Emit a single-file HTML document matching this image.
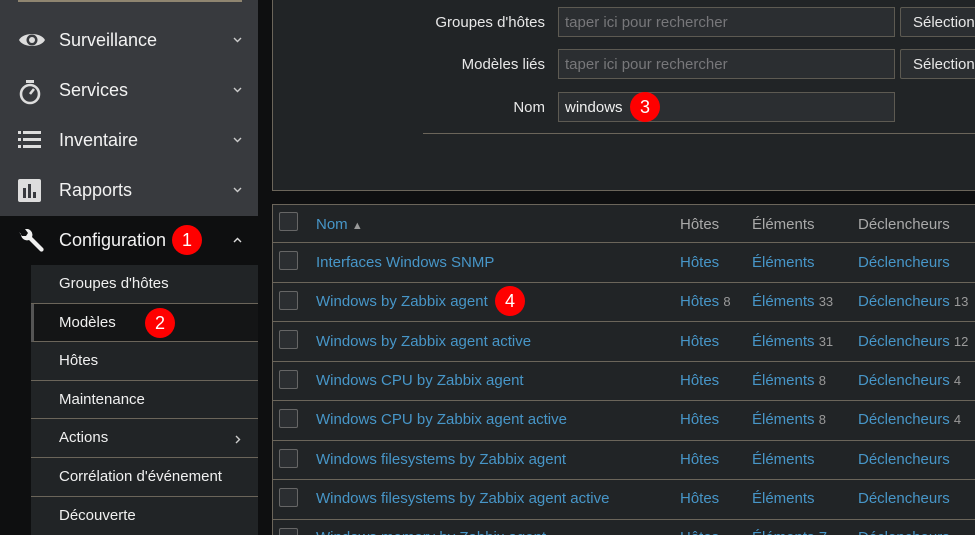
<!DOCTYPE html>
<html><head><meta charset="utf-8"><style>
*{box-sizing:border-box;margin:0;padding:0}
html,body{width:975px;height:535px;overflow:hidden}
body{background:#0e0f10;font-family:"Liberation Sans",Arial,sans-serif;position:relative}
.sb{position:absolute;left:0;top:0;width:258px;height:216px;background:#383a3e}
.topbar{position:absolute;left:18px;top:0;width:224px;height:2px;background:#8f8570}
.mi{position:absolute;left:0;width:258px;height:50px;color:#f2f2f2;font-size:18px}
.mi .t{position:absolute;left:59px;top:14px}
.mi .c{position:absolute;left:233px;top:21px}
.ic{position:absolute;left:18px;top:13px}
.conf{background:#0e0f10;top:216px}
.sub{position:absolute;left:31px;top:265px;width:227px;height:270px;background:#212426}
.si{position:absolute;left:0;width:227px;height:38.6px;border-bottom:1px solid #6b655a;color:#f0f0f0;font-size:15px}
.si span{position:absolute;left:28px;top:10px}
.badge{position:absolute;width:30px;height:30px;border-radius:50%;background:#f00;color:#fff;font-size:18px;text-align:center;line-height:30px}
.fp{position:absolute;left:272px;top:-2px;width:710px;height:193px;background:#212426;border:1px solid #6b655a}
.lbl{position:absolute;color:#e8e8e8;font-size:15px;text-align:right;width:200px;left:345px}
.inp{position:absolute;left:558px;width:337px;height:30px;background:#2b2e31;border:1px solid #5d5a52;color:#77777a;font-size:15px;padding:6px 6px}
.btn{position:absolute;left:900px;width:90px;height:30px;border:1px solid #5d5a52;border-radius:2px;background:#2b2e31;color:#e8e8e8;font-size:15px;padding:6px 12px}
.tb{position:absolute;left:272px;top:204px;width:710px;height:340px;background:#212426;border:1px solid #6b655a}
.row{position:absolute;left:272px;width:703px;border-bottom:1px solid #6b655a;font-size:15px}
.cb{position:absolute;left:7px;width:19px;height:19px;border:1px solid #666;border-radius:2px;background:#2b2e31}
.row span{position:absolute}
.lk{color:#4796c8}.g{color:#9a9a9a}.h{color:#a9a9a9}
</style></head><body>
<div class="sb"></div>
<div class="topbar"></div>
<div class="mi" style="top:16px"><svg class="ic" width="28" height="22" viewBox="0 0 28 22"><path d="M1 11C5 3 23 3 27 11C23 19 5 19 1 11Z" fill="#ddd"/><circle cx="14" cy="11" r="5.5" fill="#383a3e"/><circle cx="14" cy="11" r="3" fill="#ddd"/></svg><span class="t">Surveillance</span><svg class="c" width="9" height="6"><path d="M1 1L4.5 4.5L8 1" stroke="#ccc" stroke-width="1.4" fill="none"/></svg></div>
<div class="mi" style="top:66px"><svg class="ic" width="24" height="26" viewBox="0 0 24 26"><rect x="8" y="1" width="8" height="3" fill="#ddd"/><circle cx="12" cy="15" r="9" fill="none" stroke="#ddd" stroke-width="2.6"/><path d="M12 15L16 10" stroke="#ddd" stroke-width="2.6"/></svg><span class="t">Services</span><svg class="c" width="9" height="6"><path d="M1 1L4.5 4.5L8 1" stroke="#ccc" stroke-width="1.4" fill="none"/></svg></div>
<div class="mi" style="top:116px"><svg class="ic" width="24" height="22" viewBox="0 0 24 22"><g fill="#ddd"><rect x="0" y="2" width="3" height="3"/><rect x="5" y="2" width="18" height="3"/><rect x="0" y="9" width="3" height="3"/><rect x="5" y="9" width="18" height="3"/><rect x="0" y="16" width="3" height="3"/><rect x="5" y="16" width="18" height="3"/></g></svg><span class="t">Inventaire</span><svg class="c" width="9" height="6"><path d="M1 1L4.5 4.5L8 1" stroke="#ccc" stroke-width="1.4" fill="none"/></svg></div>
<div class="mi" style="top:166px"><svg class="ic" width="24" height="24" viewBox="0 0 24 24"><rect x="0" y="0" width="23" height="23" rx="2" fill="#ddd"/><g fill="#383a3e"><rect x="5" y="9" width="3" height="10"/><rect x="10" y="5" width="3" height="14"/><rect x="15" y="13" width="3" height="6"/></g></svg><span class="t">Rapports</span><svg class="c" width="9" height="6"><path d="M1 1L4.5 4.5L8 1" stroke="#ccc" stroke-width="1.4" fill="none"/></svg></div>
<div class="mi conf"><svg class="ic" width="26" height="26" viewBox="0 0 26 26"><path d="M3 5A6 6 0 0 0 11 11L22 22A2 2 0 0 0 25 19L14 8A6 6 0 0 0 7 0L10 4L8 7L4 7L1 3Z" fill="#f0f0f0"/></svg><span class="t">Configuration</span><svg class="c" width="9" height="6"><path d="M1 5L4.5 1.5L8 5" stroke="#ddd" stroke-width="1.4" fill="none"/></svg></div>
<div class="badge" style="left:172px;top:225px">1</div>
<div class="sub">
<div class="si" style="top:0"><span>Groupes d'hôtes</span></div>
<div class="si" style="top:38.6px;background:#141516;border-left:3px solid #555"><span style="left:25px">Modèles</span></div>
<div class="si" style="top:77.2px"><span>Hôtes</span></div>
<div class="si" style="top:115.8px"><span>Maintenance</span></div>
<div class="si" style="top:154.4px"><span>Actions</span><svg style="position:absolute;left:204px;top:16px" width="6" height="9"><path d="M1 1L4.5 4.5L1 8" stroke="#ccc" stroke-width="1.4" fill="none"/></svg></div>
<div class="si" style="top:193px"><span>Corrélation d'événement</span></div>
<div class="si" style="top:231.6px;border:none"><span>Découverte</span></div>
</div>
<div class="badge" style="left:145px;top:308px">2</div>
<div class="fp"></div>
<div class="lbl" style="top:14px">Groupes d'hôtes</div>
<div class="inp" style="top:7px">taper ici pour rechercher</div>
<div class="btn" style="top:7px">Sélection</div>
<div class="lbl" style="top:56px">Modèles liés</div>
<div class="inp" style="top:49px">taper ici pour rechercher</div>
<div class="btn" style="top:49px">Sélection</div>
<div class="lbl" style="top:99px">Nom</div>
<div class="inp" style="top:92px;color:#f0f0f0">windows</div>
<div class="badge" style="left:630px;top:92px;width:30px;height:30px">3</div>
<div style="position:absolute;left:423px;top:133px;width:560px;height:1px;background:#6b655a"></div>
<div class="tb"></div>
<div class="row" style="top:204px;height:39px"><div class="cb" style="top:8px"></div><span class="lk" style="left:44px;top:12px">Nom <span style="position:static;color:#999;font-size:11px">▲</span></span><span class="h" style="left:408px;top:12px">Hôtes</span><span class="h" style="left:480px;top:12px">Éléments</span><span class="h" style="left:586px;top:12px">Déclencheurs</span></div>
<div class="row" style="top:243px;height:39.5px"><div class="cb" style="top:8px"></div><span class="lk" style="left:44px;top:11px">Interfaces Windows SNMP</span><span class="lk" style="left:408px;top:11px">Hôtes</span><span class="lk" style="left:480px;top:11px">Éléments</span><span class="lk" style="left:586px;top:11px">Déclencheurs</span></div>
<div class="row" style="top:282.5px;height:39.5px"><div class="cb" style="top:8px"></div><span class="lk" style="left:44px;top:10px">Windows by Zabbix agent</span><span class="lk" style="left:408px;top:10px">Hôtes <span class="g" style="position:static;font-size:13px">8</span></span><span class="lk" style="left:480px;top:10px">Éléments <span class="g" style="position:static;font-size:13px">33</span></span><span class="lk" style="left:586px;top:10px">Déclencheurs <span class="g" style="position:static;font-size:13px">13</span></span></div>
<div class="row" style="top:322px;height:39.5px"><div class="cb" style="top:8px"></div><span class="lk" style="left:44px;top:11px">Windows by Zabbix agent active</span><span class="lk" style="left:408px;top:11px">Hôtes</span><span class="lk" style="left:480px;top:11px">Éléments <span class="g" style="position:static;font-size:13px">31</span></span><span class="lk" style="left:586px;top:11px">Déclencheurs <span class="g" style="position:static;font-size:13px">12</span></span></div>
<div class="row" style="top:361.5px;height:39.5px"><div class="cb" style="top:8px"></div><span class="lk" style="left:44px;top:10px">Windows CPU by Zabbix agent</span><span class="lk" style="left:408px;top:10px">Hôtes</span><span class="lk" style="left:480px;top:10px">Éléments <span class="g" style="position:static;font-size:13px">8</span></span><span class="lk" style="left:586px;top:10px">Déclencheurs <span class="g" style="position:static;font-size:13px">4</span></span></div>
<div class="row" style="top:401px;height:39.5px"><div class="cb" style="top:8px"></div><span class="lk" style="left:44px;top:10px">Windows CPU by Zabbix agent active</span><span class="lk" style="left:408px;top:10px">Hôtes</span><span class="lk" style="left:480px;top:10px">Éléments <span class="g" style="position:static;font-size:13px">8</span></span><span class="lk" style="left:586px;top:10px">Déclencheurs <span class="g" style="position:static;font-size:13px">4</span></span></div>
<div class="row" style="top:440.5px;height:39.5px"><div class="cb" style="top:8px"></div><span class="lk" style="left:44px;top:10px">Windows filesystems by Zabbix agent</span><span class="lk" style="left:408px;top:10px">Hôtes</span><span class="lk" style="left:480px;top:10px">Éléments</span><span class="lk" style="left:586px;top:10px">Déclencheurs</span></div>
<div class="row" style="top:480px;height:39.5px"><div class="cb" style="top:8px"></div><span class="lk" style="left:44px;top:10px">Windows filesystems by Zabbix agent active</span><span class="lk" style="left:408px;top:10px">Hôtes</span><span class="lk" style="left:480px;top:10px">Éléments</span><span class="lk" style="left:586px;top:10px">Déclencheurs</span></div>
<div class="row" style="top:519.5px;height:15px;border:none;overflow:hidden"><div class="cb" style="top:8px"></div><span class="lk" style="left:44px;top:9px">Windows memory by Zabbix agent</span><span class="lk" style="left:408px;top:9px">Hôtes</span><span class="lk" style="left:480px;top:9px">Éléments 7</span><span class="lk" style="left:586px;top:9px">Déclencheurs</span></div>
<div class="badge" style="left:495px;top:286px">4</div>
</body></html>
